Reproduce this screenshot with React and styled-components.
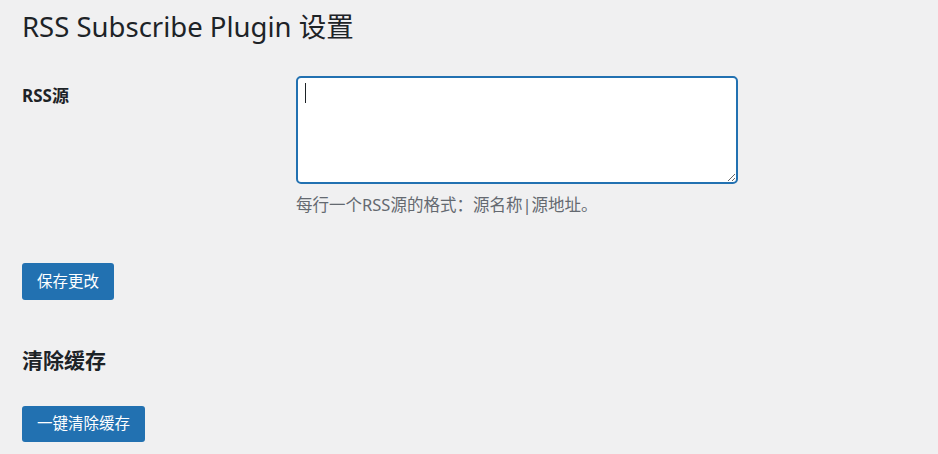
import React from "react";
import styled, { createGlobalStyle } from "styled-components";

const Global = createGlobalStyle`
  html, body { margin: 0; padding: 0; background: #f0f0f1; }
  body {
    font-family: "Noto Sans", "Noto Sans CJK SC", sans-serif;
    color: #1d2327;
  }
`;

const Page = styled.div`
  padding: 0 22px;
  min-height: 454px;
  box-sizing: border-box;
`;

const Title = styled.h1`
  margin: 0;
  padding-top: 9px;
  font-size: 27.5px;
  line-height: 36px;
  font-weight: 400;
  color: #1d2327;
`;

const FormRow = styled.div`
  display: grid;
  grid-template-columns: 274px 1fr;
  margin-top: 31px;
`;

const Label = styled.label`
  padding-top: 8px;
  font-size: 17px;
  line-height: 24px;
  font-weight: 700;
`;

const Field = styled.div`
  display: flex;
  flex-direction: column;
  align-items: flex-start;
`;

const AreaWrap = styled.div`
  position: relative;
  width: 442px;
  height: 108px;
`;

const Area = styled.textarea`
  width: 100%;
  height: 100%;
  box-sizing: border-box;
  border: 2px solid #2271b1;
  border-radius: 5px;
  background: #fff;
  outline: none;
  caret-color: transparent;
  padding: 6px 8px;
  font: inherit;
  display: block;
`;

const Caret = styled.span`
  position: absolute;
  left: 9px;
  top: 7px;
  width: 1px;
  height: 20px;
  background: #1d2327;
`;

const Description = styled.p`
  margin: 9px 0 0;
  font-size: 16.5px;
  line-height: 24px;
  color: #646970;
`;

const Button = styled.button`
  display: inline-block;
  height: ${(p) => p.$h || 37}px;
  padding: 0 15px;
  border: none;
  border-radius: 3px;
  background: #2271b1;
  color: #fff;
  font-family: "Noto Sans", "Noto Sans CJK SC", sans-serif;
  font-size: 15.5px;
  line-height: 1;
  cursor: pointer;
  margin-top: ${(p) => p.$mt}px;
`;

const SectionTitle = styled.h2`
  margin: 46px 0 0;
  font-size: 21px;
  line-height: 28px;
  font-weight: 700;
  color: #1d2327;
`;

export default function App() {
  return (
    <>
      <Global />
      <Page>
        <Title>RSS Subscribe Plugin 设置</Title>
        <FormRow>
          <Label htmlFor="rss">RSS源</Label>
          <Field>
            <AreaWrap>
              <Area id="rss" />
              <Caret />
            </AreaWrap>
            <Description>每行一个RSS源的格式：源名称|源地址。</Description>
          </Field>
        </FormRow>
        <div>
          <Button $mt={46}>保存更改</Button>
        </div>
        <SectionTitle>清除缓存</SectionTitle>
        <div>
          <Button $mt={32} $h={36}>一键清除缓存</Button>
        </div>
      </Page>
    </>
  );
}
